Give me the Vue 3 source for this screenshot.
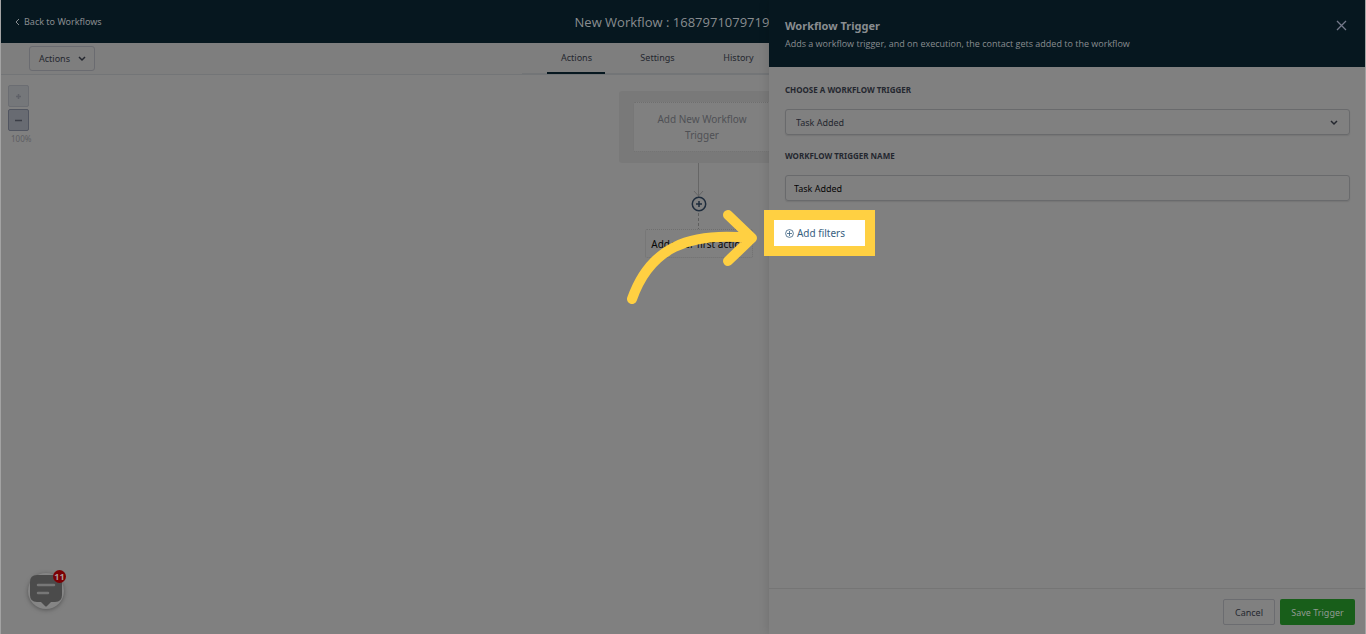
<script setup>
import { ref } from 'vue'

const tabs = ['Actions', 'Settings', 'History']
const activeTab = ref('Actions')
const trigger = ref('Task Added')
const triggerName = ref('Task Added')
</script>

<template>
  <div class="app">
    <header class="topbar">
      <a class="back" href="#">
        <svg width="5" height="8" viewBox="0 0 5 8"><path d="M4 1 L1 4 L4 7" /></svg>
        Back to Workflows
      </a>
      <h1 class="title">New Workflow : 1687971079719</h1>
    </header>

    <div class="toolbar">
      <button class="menu-button" type="button">
        Actions
        <svg width="8" height="6" viewBox="0 0 8 6"><path d="M1 1 L4 4 L7 1" /></svg>
      </button>
      <nav class="tabs">
        <button
          v-for="tab in tabs"
          :key="tab"
          type="button"
          class="tab"
          :class="{ active: tab === activeTab }"
          @click="activeTab = tab"
        >{{ tab }}</button>
      </nav>
    </div>

    <main class="canvas">
      <div class="zoom">
        <button class="zoom-button faded" type="button" aria-label="Zoom in">
          <svg width="7" height="7" viewBox="0 0 7 7"><path d="M1 3.5 H6 M3.5 1 V6" /></svg>
        </button>
        <button class="zoom-button" type="button" aria-label="Zoom out">
          <svg width="7" height="7" viewBox="0 0 7 7"><path d="M0 3.5 H7" /></svg>
        </button>
        <span class="zoom-level">100%</span>
      </div>
      <div class="flow">
        <div class="trigger-group">
          <button class="new-trigger" type="button">Add New Workflow Trigger</button>
        </div>
        <svg class="connector" width="16" height="66" viewBox="0 0 16 66">
          <path class="line" d="M7.5 0 V34 M3 28 L7.5 33 L12 28" />
          <path class="dashed" d="M7.5 50 V66" />
          <circle cx="8" cy="41" r="6.7" />
          <path class="plus" d="M5 41 H11 M8 38 V44" />
        </svg>
        <button class="first-action" type="button">Add your first action</button>
      </div>
    </main>

    <button class="chat" type="button" aria-label="Messages">
      <svg width="32" height="32" viewBox="0 0 32 32">
        <path class="bubble" d="M7 0 H25 Q32 0 32 7 V20 Q32 27 25 27 H21 L17 31 Q16 32 15 31 L11 27 H7 Q0 27 0 20 V7 Q0 0 7 0 Z" />
        <path class="lines" d="M8 10 H24 M8 18 H18" />
      </svg>
      <span class="badge">11</span>
    </button>

    <aside class="drawer">
      <header class="drawer-head">
        <div>
          <h2>Workflow Trigger</h2>
          <p>Adds a workflow trigger, and on execution, the contact gets added to the workflow</p>
        </div>
        <button class="close" type="button" aria-label="Close">
          <svg width="11" height="11" viewBox="0 0 11 11"><path d="M1 1 L10 10 M10 1 L1 10" /></svg>
        </button>
      </header>
      <form class="drawer-body" @submit.prevent>
        <label for="trigger">CHOOSE A WORKFLOW TRIGGER</label>
        <div class="select-wrap">
          <select id="trigger" v-model="trigger">
            <option>Task Added</option>
          </select>
          <svg width="8" height="6" viewBox="0 0 8 6"><path d="M1 1 L4 4 L7 1" /></svg>
        </div>
        <label for="trigger-name">WORKFLOW TRIGGER NAME</label>
        <input id="trigger-name" v-model="triggerName" type="text" />
        <button class="add-filters" type="button">
          <svg width="9" height="9" viewBox="0 0 9 9">
            <circle cx="4.5" cy="4.5" r="3.9" />
            <path d="M2 4.5 H7 M4.5 2 V7" />
          </svg>
          Add filters
        </button>
      </form>
      <footer class="drawer-foot">
        <button class="cancel" type="button">Cancel</button>
        <button class="save" type="button">Save Trigger</button>
      </footer>
    </aside>

    <svg class="pointer" width="134" height="98" viewBox="0 0 134 98">
      <path d="M7 91 C25 40 63 24 124 30 M103 7 L127 30 L103 53" />
    </svg>
  </div>
</template>

<style>
body {
  background: #808080;
}
</style>

<style scoped>
.app {
  position: relative;
  display: flex;
  flex-direction: column;
  min-height: 100vh;
  box-sizing: border-box;
  overflow: hidden;
  background: #808080;
  border: solid #a3a3a3;
  border-width: 0 1px;
  font-family: "Noto Sans", "Open Sans", sans-serif;
  font-size: 9px;
  color: #24272f;
}
.app * {
  box-sizing: border-box;
}
button,
input,
select {
  font: inherit;
  color: inherit;
  margin: 0;
}
button {
  padding: 0;
  border: 0;
  background: none;
  white-space: nowrap;
}
svg {
  display: block;
  flex: none;
  fill: none;
  stroke: currentColor;
}
.topbar {
  display: grid;
  grid-template-columns: 1fr auto 1fr;
  align-items: center;
  height: 43px;
  padding: 0 36px 0 14px;
  background: #06171f;
  color: #898d90;
}
.back {
  display: flex;
  align-items: center;
  gap: 4px;
  color: inherit;
  text-decoration: none;
}
.title {
  margin: 0;
  font-family: "Open Sans", "Noto Sans", sans-serif;
  font-size: 13px;
  font-weight: 400;
  line-height: 16px;
}
.toolbar {
  display: flex;
  align-items: center;
  height: 32px;
  padding-left: 28px;
  border-bottom: 1px solid #737577;
  background: #7e7e7e;
}
.menu-button {
  display: flex;
  align-items: center;
  gap: 8px;
  height: 25px;
  padding: 0 8px 0 9px;
  border: 1px solid #6a6b70;
  border-radius: 3px;
}
.menu-button svg {
  stroke-width: 1.5;
}
.tabs {
  display: flex;
  gap: 23px;
  align-self: stretch;
  flex: 1;
  margin-left: 32%;
  padding-left: 25px;
  border-bottom: 1px solid #737577;
}
.tab {
  width: 58px;
  height: 31px;
  border-bottom: 2px solid transparent;
}
.tab.active {
  border-color: #06171f;
}
.canvas {
  position: relative;
  display: flex;
  justify-content: center;
  flex: 1;
  padding: 16px 0 0 32px;
}
.zoom {
  position: absolute;
  top: 10px;
  left: 7px;
  display: flex;
  flex-direction: column;
  gap: 2px;
}
.zoom-button {
  display: flex;
  align-items: center;
  justify-content: center;
  width: 21px;
  height: 22px;
  border: 1px solid #515560;
  border-radius: 2px;
  background: #686b72;
  color: #3a3d46;
}
.zoom-button svg {
  stroke-width: 1.5;
}
.zoom-button.faded {
  border-color: #6b6d72;
  background: #75777a;
  color: #5f6168;
}
.zoom-level {
  padding-left: 3px;
  font-size: 8px;
  line-height: 12px;
  color: #5d5e62;
}
.flow {
  display: flex;
  flex-direction: column;
  align-items: center;
}
.trigger-group {
  width: 160px;
  height: 72px;
  padding: 11px 8px 11px 14px;
  border-radius: 3px;
  background: #797979;
}
.new-trigger {
  width: 100%;
  height: 50px;
  padding: 0 16px;
  border: 1px dotted #6f6f6f;
  border-radius: 2px;
  background: #808080;
  color: #4f5055;
  font-size: 10px;
  line-height: 16px;
  white-space: normal;
}
.connector .line {
  stroke: #666;
}
.connector .dashed {
  stroke: #5e5e5e;
  stroke-dasharray: 3 2;
}
.connector circle,
.connector .plus {
  stroke: #1e2c3c;
  stroke-width: 1.5;
}
.first-action {
  width: 108px;
  height: 29px;
  border: 1px dotted #6f6f6f;
  border-radius: 2px;
  color: #050505;
  font-size: 10px;
}
.chat {
  position: absolute;
  left: 27px;
  bottom: 25px;
  display: flex;
  align-items: center;
  justify-content: center;
  width: 36px;
  height: 36px;
  border-radius: 50%;
  background: #858585;
  box-shadow: 0 1px 4px #555;
}
.chat .bubble {
  fill: #4b4b4b;
  stroke: none;
}
.chat .lines {
  stroke: #777;
  stroke-width: 2.5;
  stroke-linecap: round;
}
.badge {
  position: absolute;
  top: -3px;
  right: -2px;
  width: 13px;
  height: 13px;
  border-radius: 50%;
  background: #7b0004;
  color: #a99;
  font-size: 9px;
  font-weight: 700;
  line-height: 13px;
}
.drawer {
  position: absolute;
  top: 0;
  right: 0;
  bottom: 0;
  display: flex;
  flex-direction: column;
  width: 43.7%;
  background: #808080;
  box-shadow: 0 0 10px rgba(0, 0, 0, 0.15);
}
.drawer-head {
  display: flex;
  justify-content: space-between;
  align-items: flex-start;
  height: 67px;
  padding: 18px 18px 0 16px;
  background: #06171f;
  color: #898d90;
}
.drawer-head h2 {
  margin: 0;
  font-size: 11px;
  font-weight: 700;
  line-height: 16px;
}
.drawer-head p {
  margin: 3px 0 0;
  font-family: "Open Sans", "Noto Sans", sans-serif;
  line-height: 14px;
}
.close {
  padding-top: 2px;
  color: #74798a;
}
.close svg {
  stroke-width: 1.3;
}
.drawer-body {
  display: flex;
  flex-direction: column;
  align-items: flex-start;
  flex: 1;
  padding: 16px 15px 0 16px;
}
label {
  font-size: 8px;
  font-weight: 700;
  line-height: 14px;
}
.select-wrap {
  position: relative;
  width: 100%;
  margin: 12px 0 14px;
}
select,
input {
  display: block;
  width: 100%;
  height: 26px;
  padding: 0 8px;
  border: 1px solid #696a6c;
  border-radius: 3px;
  background: transparent;
  box-shadow: 0 1px 1px #757575;
  outline: 0;
}
select {
  padding-left: 10px;
  appearance: none;
}
.select-wrap svg {
  position: absolute;
  top: 11px;
  right: 12px;
  stroke-width: 1.5;
  pointer-events: none;
}
input {
  margin: 12px 0 9px;
  color: #050505;
}
.add-filters {
  display: flex;
  align-items: center;
  gap: 3px;
  height: 46px;
  margin-left: -21px;
  padding: 0 20px 0 11px;
  border: 10px solid #ffd042;
  background: #fff;
  color: #38607f;
  font-size: 10px;
}
.add-filters svg {
  stroke-width: 0.8;
}
.drawer-foot {
  display: flex;
  justify-content: flex-end;
  gap: 5px;
  height: 46px;
  padding: 10px 10px 0;
  border-top: 1px solid #757575;
}
.drawer-foot button {
  height: 26px;
  border-radius: 2px;
}
.drawer-foot .cancel {
  width: 52px;
  border: 1px solid #6b6c70;
}
.drawer-foot .save {
  width: 75px;
  background: #185e1a;
  color: #929a92;
}
.pointer {
  position: absolute;
  top: 208px;
  left: 624px;
  pointer-events: none;
  stroke: #ffd042;
  stroke-width: 10;
  stroke-linecap: round;
  stroke-linejoin: round;
}
</style>
